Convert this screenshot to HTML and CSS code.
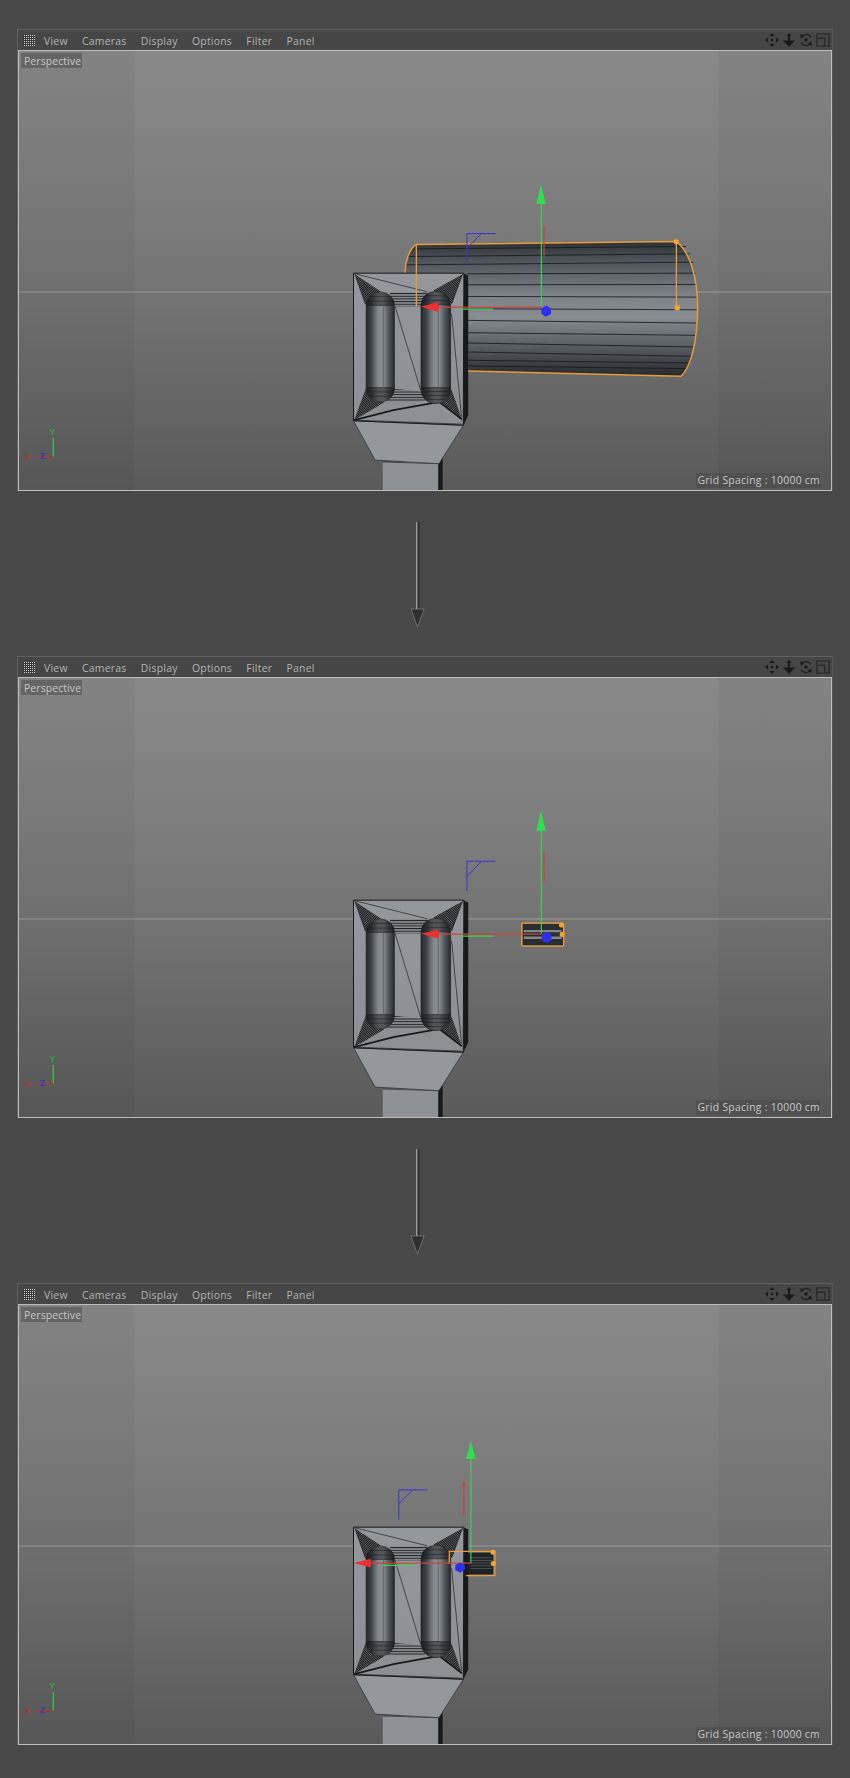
FILE: index.html
```html
<!DOCTYPE html>
<html lang="en">
<head>
<meta charset="utf-8">
<title>Perspective viewports</title>
<link rel="stylesheet" href="styles.css">
</head>
<body>
<svg class="defs" width="0" height="0" aria-hidden="true">
  <defs>
    <linearGradient id="cap" x1="0" x2="1" y1="0" y2="0">
      <stop offset="0" stop-color="#25282b"/><stop offset=".2" stop-color="#41464b"/>
      <stop offset=".3" stop-color="#62676c"/><stop offset=".45" stop-color="#878c91"/>
      <stop offset=".62" stop-color="#858a8f"/><stop offset=".78" stop-color="#565b60"/>
      <stop offset=".88" stop-color="#42474c"/><stop offset="1" stop-color="#25282b"/>
    </linearGradient>
    <linearGradient id="cyl" x1="0" x2="0" y1="0" y2="1">
      <stop offset="0" stop-color="#2c3034"/><stop offset=".12" stop-color="#4a5056"/>
      <stop offset=".4" stop-color="#7d8287"/><stop offset=".56" stop-color="#888d91"/>
      <stop offset=".8" stop-color="#53585d"/><stop offset="1" stop-color="#26292c"/>
    </linearGradient>
    <linearGradient id="face" x1="0" x2="0" y1="0" y2="1">
      <stop offset="0" stop-color="#94989c"/><stop offset="1" stop-color="#8c9094"/>
    </linearGradient>
    <pattern id="hatch" width="5" height="5" patternUnits="userSpaceOnUse" patternTransform="rotate(45)">
      <rect width="5" height="5" fill="#7d8185"/><rect width="3.400" height="5" fill="#17191b"/>
    </pattern>
    <pattern id="hatch2" width="5" height="5" patternUnits="userSpaceOnUse" patternTransform="rotate(-45)">
      <rect width="5" height="5" fill="#7d8185"/><rect width="3.400" height="5" fill="#17191b"/>
    </pattern>
    <pattern id="rows" width="8" height="8" patternUnits="userSpaceOnUse">
      <rect width="8" height="8" fill="#8b8f93"/><rect width="8" height="3" fill="#1f2123"/>
    </pattern>
    <symbol id="axes" overflow="visible" viewBox="-966 -360 2442 1320">
      <path class="ax-g" d="M-863 804V860"/>
      <path class="ax-r" d="M-915 860H-863"/>
      <text class="ax-t ax-ty" x="-875" y="796">Y</text>
      <text class="ax-t ax-tx" x="-950" y="871">X</text>
      <text class="ax-t ax-tz" x="-904" y="866">Z</text>
    </symbol>
    <symbol id="model" overflow="visible" viewBox="-966 -360 2442 1320">
      <!-- stem -->
      <path fill="#8e9296" d="M128 876H295V960H128Z"/>
      <path fill="#17191b" d="M295 880L308 858V960H295Z"/>
      <path fill="none" stroke="#26282a" stroke-width="2" d="M128 876L296 881"/>
      <!-- taper -->
      <path fill="#94989c" stroke="#26282a" stroke-width="2" d="M40 752L370 766L297 881L105 870Z"/>
      <!-- body side -->
      <path fill="#17191b" d="M370 308L385 315V735L370 768Z"/>
      <!-- face -->
      <path fill="url(#face)" stroke="#17191b" stroke-width="3" d="M40 308H372L370 765L40 752Z"/>
      <!-- rows between capsules -->
      <path fill="url(#rows)" d="M150 365H262V408H150Z"/>
      <path fill="url(#rows)" d="M150 655L255 665V695H130Z"/>
      <!-- corner fans -->
      <path fill="url(#hatch)" d="M44 311L122 363L76 402Z"/>
      <path fill="url(#hatch2)" d="M368 311L280 360L336 400Z"/>
      <path fill="url(#hatch2)" d="M42 750L78 652L132 697Z"/>
      <path fill="url(#hatch)" d="M366 748L296 697L335 658Z"/>
      <!-- wire -->
      <g fill="none" stroke="#1b1d1f" stroke-width="2">
        <path d="M45 310L262 364"/>
        <path d="M44 311L76 402"/>
        <path d="M368 311L335 400"/>
        <path d="M165 408L242 660"/>
        <path d="M335 430L365 740"/>
        <path d="M42 750L365 762"/>
      </g>
      <path fill="none" stroke="#17191b" stroke-width="5" d="M42 750L160 720L298 695L366 748"/>
      <!-- capsules -->
      <g stroke="#1c1e20" stroke-width="2">
        <rect fill="url(#cap)" x="78" y="365" width="85" height="330" rx="40"/>
        <rect fill="url(#cap)" x="243" y="363" width="89" height="337" rx="42"/>
      </g>
      <g class="cap-end">
        <path d="M79 405C79 380 100 366 120 366C141 366 162 380 162 405Z"/>
        <path d="M79 652C79 680 100 694 120 694C141 694 162 680 162 652Z"/>
        <path d="M244 403C244 378 265 364 287 364C310 364 331 378 331 403Z"/>
        <path d="M244 652C244 684 265 699 287 699C310 699 331 684 331 652Z"/>
      </g>
      <g fill="none" stroke="#1c1e20" stroke-width="1.600">
        <path d="M92 378H150M82 392H159M79 405H162"/>
        <path d="M79 652H162M82 665H160M88 678H154"/>
        <path d="M258 376H318M248 390H327M244 403H331"/>
        <path d="M244 652H331M246 664H329M251 676H324M260 688H316"/>
      </g>
      <g fill="none" stroke="#33373a" stroke-width="1.200">
        <path d="M130 405V650M295 403V652"/>
      </g>
    </symbol>
  </defs>
</svg>

<main class="stack">
  <section class="pane">
    <header class="bar">
      <span class="grip"></span>
      <nav class="menu"><span>View</span><span>Cameras</span><span>Display</span><span>Options</span><span>Filter</span><span>Panel</span></nav>
      <span class="tools">
        <svg class="tool" viewBox="0 0 16 16"><path d="M8 0L11 3.500H5ZM8 16L5 12.500H11ZM0 8L3.500 5V11ZM16 8L12.500 11V5Z"/><circle cx="8" cy="8" r="1.500"/></svg>
        <svg class="tool" viewBox="0 0 16 16"><path d="M8 0L11 3H9.200V8.500H15L8 16L1 8.500H6.800V3H5Z"/></svg>
        <svg class="tool" viewBox="0 0 16 16"><path class="tool-line" d="M13.500 5A6.300 6.300 0 0 0 3.500 3.500M2.500 11A6.300 6.300 0 0 0 12.500 12.500"/><path d="M1.500 1.500L6 3.500L2 6.500ZM14.500 14.500L10 12.500L14 9.500Z"/><circle cx="8" cy="8" r="2"/></svg>
        <svg class="tool tool-win" viewBox="0 0 16 16"><path class="tool-line" d="M1 1H15V15H1ZM1 6H10V15"/></svg>
      </span>
    </header>
    <div class="view">
      <svg class="scene" viewBox="-966 -360 2442 1320" aria-hidden="true">
        <use href="#axes" x="-966" y="-360" width="2442" height="1320"/>
        <!-- cylinder -->
        <path fill="url(#cyl)" d="M228 222L1010 213C1050 240 1075 320 1075 410C1075 510 1055 590 1025 618L385 602V308H195C195 270 210 232 228 222Z"/>
        <g fill="none" stroke="#17191b" stroke-width="2.500">
          <path d="M228 235L1040 228M205 258L1052 250M198 283L1062 275M380 310L1068 308M380 343L1072 342M380 378L1074 380M380 415L1072 418M380 450L1070 458M380 487L1068 495M380 518L1064 530M380 545L1058 558M380 570L1050 578M380 587L1042 595"/>
        </g>
        <use href="#model" x="-966" y="-360" width="2442" height="1320"/>
        <g fill="none" stroke="#e79b3c" stroke-width="4.500">
          <path d="M195 306C195 270 210 232 228 222L1010 213C1050 240 1075 320 1075 410C1075 510 1055 590 1025 618L385 602"/>
          <path stroke-width="4" d="M229 222V408M1011 214V412"/>
        </g>
        <rect class="pt" x="1003" y="206" width="15" height="15" rx="6"/>
        <rect class="pt" x="1006" y="405" width="15" height="15"/>
        <g class="gizmo">
          <path class="blue" d="M467 189H381V280M381 233L425 189"/>
          <path class="red-l" d="M613 165V260"/>
          <path class="green-l" d="M360 416H460"/>
          <path class="red-l" d="M295 410L605 410"/>
          <path class="green-l" d="M605 405V100"/>
          <path class="head-g" d="M604 42L618 100H590Z"/>
          <path class="head-r" d="M243 409L295 395V425Z"/>
          <path class="hex" d="M619 405L634 414V431L619 439L605 431V414Z"/>
        </g>
      </svg>
      <span class="tag tag-name">Perspective</span>
      <span class="tag tag-grid">Grid Spacing : 10000 cm</span>
    </div>
  </section>

  <div class="link"><svg class="down" viewBox="0 0 20 110"><path class="down-d" d="M7.500 0V92"/><path class="down-l" d="M5.800 0V92"/><path class="down-h" d="M0 87L13 87L6.500 105Z"/></svg></div>

  <section class="pane">
    <header class="bar">
      <span class="grip"></span>
      <nav class="menu"><span>View</span><span>Cameras</span><span>Display</span><span>Options</span><span>Filter</span><span>Panel</span></nav>
      <span class="tools">
        <svg class="tool" viewBox="0 0 16 16"><path d="M8 0L11 3.500H5ZM8 16L5 12.500H11ZM0 8L3.500 5V11ZM16 8L12.500 11V5Z"/><circle cx="8" cy="8" r="1.500"/></svg>
        <svg class="tool" viewBox="0 0 16 16"><path d="M8 0L11 3H9.200V8.500H15L8 16L1 8.500H6.800V3H5Z"/></svg>
        <svg class="tool" viewBox="0 0 16 16"><path class="tool-line" d="M13.500 5A6.300 6.300 0 0 0 3.500 3.500M2.500 11A6.300 6.300 0 0 0 12.500 12.500"/><path d="M1.500 1.500L6 3.500L2 6.500ZM14.500 14.500L10 12.500L14 9.500Z"/><circle cx="8" cy="8" r="2"/></svg>
        <svg class="tool tool-win" viewBox="0 0 16 16"><path class="tool-line" d="M1 1H15V15H1ZM1 6H10V15"/></svg>
      </span>
    </header>
    <div class="view">
      <svg class="scene" viewBox="-966 -360 2442 1320" aria-hidden="true">
        <use href="#axes" x="-966" y="-360" width="2442" height="1320"/>
        <use href="#model" x="-966" y="-360" width="2442" height="1320"/>
        <g transform="translate(0 9)">
          <rect fill="#2a2d30" x="548" y="370" width="122" height="65"/>
          <path fill="none" stroke="#80858a" stroke-width="7" d="M552 392H666M552 412H666"/>
          <rect fill="none" stroke="#e79b3c" stroke-width="4" x="546" y="368" width="126" height="69" rx="3"/>
          <rect class="pt" x="658" y="366" width="15" height="15" rx="6"/>
          <rect class="pt" x="660" y="395" width="15" height="15" rx="6"/>
          <g class="gizmo">
            <path class="blue" d="M467 182H381V272M381 228L425 182"/>
            <path class="red-l" d="M613 155V250"/>
            <path class="green-l" d="M360 407H460"/>
            <path class="red-l" d="M295 401L605 401"/>
            <path class="green-l" d="M605 400V90"/>
            <path class="head-g" d="M604 30L618 90H590Z"/>
            <path class="head-r" d="M243 400L295 387V414Z"/>
            <path class="hex" d="M620 395L635 403V420L620 428L606 420V403Z"/>
          </g>
        </g>
      </svg>
      <span class="tag tag-name">Perspective</span>
      <span class="tag tag-grid">Grid Spacing : 10000 cm</span>
    </div>
  </section>

  <div class="link"><svg class="down" viewBox="0 0 20 110"><path class="down-d" d="M7.500 0V92"/><path class="down-l" d="M5.800 0V92"/><path class="down-h" d="M0 87L13 87L6.500 105Z"/></svg></div>

  <section class="pane">
    <header class="bar">
      <span class="grip"></span>
      <nav class="menu"><span>View</span><span>Cameras</span><span>Display</span><span>Options</span><span>Filter</span><span>Panel</span></nav>
      <span class="tools">
        <svg class="tool" viewBox="0 0 16 16"><path d="M8 0L11 3.500H5ZM8 16L5 12.500H11ZM0 8L3.500 5V11ZM16 8L12.500 11V5Z"/><circle cx="8" cy="8" r="1.500"/></svg>
        <svg class="tool" viewBox="0 0 16 16"><path d="M8 0L11 3H9.200V8.500H15L8 16L1 8.500H6.800V3H5Z"/></svg>
        <svg class="tool" viewBox="0 0 16 16"><path class="tool-line" d="M13.500 5A6.300 6.300 0 0 0 3.500 3.500M2.500 11A6.300 6.300 0 0 0 12.500 12.500"/><path d="M1.500 1.500L6 3.500L2 6.500ZM14.500 14.500L10 12.500L14 9.500Z"/><circle cx="8" cy="8" r="2"/></svg>
        <svg class="tool tool-win" viewBox="0 0 16 16"><path class="tool-line" d="M1 1H15V15H1ZM1 6H10V15"/></svg>
      </span>
    </header>
    <div class="view">
      <svg class="scene" viewBox="-966 -360 2442 1320" aria-hidden="true">
        <use href="#axes" x="-966" y="-360" width="2442" height="1320"/>
        <g transform="translate(0 -12)">
          <rect fill="#1f2123" x="376" y="397" width="84" height="65"/>
          <path fill="none" stroke="#80858a" stroke-width="1.500" d="M392 412H456M392 420H456M392 428H456M392 436H456M392 444H456"/>
        </g>
        <use href="#model" x="-966" y="-360" width="2442" height="1320"/>
        <g transform="translate(0 -12)">
          <path fill="none" stroke="#e79b3c" stroke-width="4" d="M328 430V393H465V466H378"/>
          <rect class="pt" x="452" y="388" width="15" height="15" rx="6"/>
          <rect class="pt" x="453" y="422" width="15" height="15" rx="6"/>
          <g class="gizmo">
            <path class="blue" d="M262 208H176V297M176 250L218 208"/>
            <path class="red-l" d="M372 190V285"/>
            <path class="head-rs" d="M372 180L378 198H366Z"/>
            <path class="green-l" d="M125 435H220"/>
            <path class="red-l" d="M92 428L393 428"/>
            <path class="green-l" d="M393 428V115"/>
            <path class="head-g" d="M393 60L407 115H379Z"/>
            <path class="head-r" d="M40 428L92 415V441Z"/>
            <path class="hex" d="M360 426L375 434V449L360 457L346 449V434Z"/>
          </g>
        </g>
      </svg>
      <span class="tag tag-name">Perspective</span>
      <span class="tag tag-grid">Grid Spacing : 10000 cm</span>
    </div>
  </section>
</main>
</body>
</html>
```

FILE: styles.css
```css
* { box-sizing: border-box; }
html, body { margin: 0; padding: 0; }
body {
  width: 850px;
  height: 1778px;
  overflow: hidden;
  background: #484848;
  font-family: "Open Sans", "Liberation Sans", sans-serif;
}
.defs { position: absolute; }
.stack {
  display: flex;
  flex-direction: column;
  padding: 29px 17px 0 17px;
}
.pane {
  width: 816px;
  height: 462px;
  display: flex;
  flex-direction: column;
  border-top: 1px solid #606060;
  border-left: 1px solid #606060;
  border-right: 1px solid #555;
}
.bar {
  height: 20px;
  flex: none;
  display: flex;
  align-items: center;
  background: #464646;
}
.grip {
  width: 12px;
  height: 11px;
  margin-left: 5px;
  background-image: conic-gradient(#d0d0d0 25%, #383838 0);
  background-size: 2px 2px;
}
.menu {
  display: flex;
  gap: 14.3px;
  margin-left: 9px;
  padding-top: 2px;
  font-size: 10.4px;
  letter-spacing: .25px;
  color: #b4b4b4;
}
.tools {
  display: flex;
  align-items: center;
  gap: 3px;
  margin-left: auto;
  margin-right: 2px;
}
.tool { width: 14px; height: 14px; fill: #1a1a1a; }
.tool-line { fill: none; stroke: #222; stroke-width: 1.600; }
.tool-win { opacity: .75; }
.view {
  position: relative;
  flex: 1;
  border: 1px solid #bdbdbd;
  overflow: hidden;
  background:
    linear-gradient(to right,
      rgba(0,0,0,.045) 0, rgba(0,0,0,.045) 115px,
      transparent 116px, transparent 699px,
      rgba(0,0,0,.045) 700px, rgba(0,0,0,.045) 100%),
    linear-gradient(to bottom, #898989 0, #7f7f7f 30%, #747474 55%, #686868 75%, #5a5a5a 100%);
}
.view::before {
  content: "";
  position: absolute;
  left: 0;
  right: 0;
  top: 240px;
  height: 2px;
  background: rgba(175,175,175,.3);
}
.scene { position: absolute; left: 0; top: 0; width: 100%; height: 100%; display: block; }
.cap-end { fill: rgba(18,20,22,.45); }
.tag {
  position: absolute;
  font-size: 10.4px;
  line-height: 15px;
  height: 15px;
  color: #c8c8c8;
  background: rgba(72,72,72,.5);
}
.tag-name { left: 2px; top: 2px; line-height: 17px; padding: 0 1px 0 3px; letter-spacing: .12px; }
.tag-grid { right: 11px; bottom: 2px; padding: 0 0 0 2px; letter-spacing: .28px; }
.link { height: 165px; padding: 31px 0 0 394px; }
.down { width: 20px; height: 110px; display: block; }
.down-d { stroke: #2b2b2b; stroke-width: 2; fill: none; }
.down-l { stroke: #a8a8a8; stroke-width: 1.200; fill: none; }
.down-h { fill: #2e2e2e; stroke: #8a8a8a; stroke-width: .6; }
.pt { fill: #f3a32f; }
.gizmo { fill: none; }
.blue { stroke: #3a35cf; stroke-width: 3; fill: none; }
.red-l { stroke: #c8453f; stroke-width: 3.500; fill: none; }
.green-l { stroke: #3fd257; stroke-width: 3.500; fill: none; }
.head-g { fill: #2ee04e; }
.head-r { fill: #ee2f2f; }
.head-rs { fill: #c8453f; }
.hex { fill: #2f2ff0; }
.ax-g { stroke: #37c24d; stroke-width: 4; fill: none; }
.ax-r { stroke: #a83a3c; stroke-width: 4; fill: none; }
.ax-t { font-family: "Liberation Sans", sans-serif; font-size: 28px; font-weight: 700; }
.ax-ty { fill: #35a048; }
.ax-tx { fill: #a03a3c; }
.ax-tz { fill: #3d39b8; }
```
